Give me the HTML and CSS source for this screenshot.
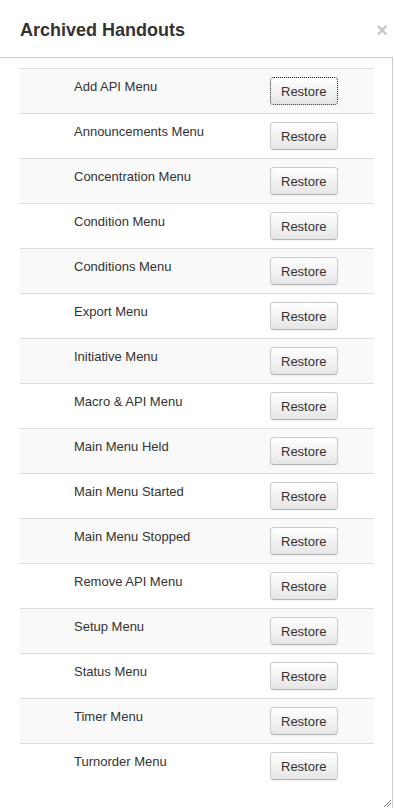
FILE: index.html
```html
<!DOCTYPE html>
<html lang="en">
<head>
    <meta charset="UTF-8">
    <meta name="viewport" content="width=device-width, initial-scale=1.0">
    <title>Archived Handouts</title>
    <link rel="stylesheet" href="styles.css">
</head>
<body>
    <div class="dialog">
        <div class="dialog-header">
            <h2>Archived Handouts</h2>
            <span class="close">&times;</span>
        </div>

        <!-- Archived handout list -->
        <div class="dialog-content">
            <table class="handouts">
                <tbody>
                    <tr><td class="name">Add API Menu</td><td class="action"><button class="btn focus">Restore</button></td></tr>
                    <tr><td class="name">Announcements Menu</td><td class="action"><button class="btn">Restore</button></td></tr>
                    <tr><td class="name">Concentration Menu</td><td class="action"><button class="btn">Restore</button></td></tr>
                    <tr><td class="name">Condition Menu</td><td class="action"><button class="btn">Restore</button></td></tr>
                    <tr><td class="name">Conditions Menu</td><td class="action"><button class="btn">Restore</button></td></tr>
                    <tr><td class="name">Export Menu</td><td class="action"><button class="btn">Restore</button></td></tr>
                    <tr><td class="name">Initiative Menu</td><td class="action"><button class="btn">Restore</button></td></tr>
                    <tr><td class="name">Macro &amp; API Menu</td><td class="action"><button class="btn">Restore</button></td></tr>
                    <tr><td class="name">Main Menu Held</td><td class="action"><button class="btn">Restore</button></td></tr>
                    <tr><td class="name">Main Menu Started</td><td class="action"><button class="btn">Restore</button></td></tr>
                    <tr><td class="name">Main Menu Stopped</td><td class="action"><button class="btn">Restore</button></td></tr>
                    <tr><td class="name">Remove API Menu</td><td class="action"><button class="btn">Restore</button></td></tr>
                    <tr><td class="name">Setup Menu</td><td class="action"><button class="btn">Restore</button></td></tr>
                    <tr><td class="name">Status Menu</td><td class="action"><button class="btn">Restore</button></td></tr>
                    <tr><td class="name">Timer Menu</td><td class="action"><button class="btn">Restore</button></td></tr>
                    <tr><td class="name">Turnorder Menu</td><td class="action"><button class="btn">Restore</button></td></tr>
                </tbody>
            </table>

            <!-- resize grip -->
            <svg class="grip" width="8" height="8" viewBox="0 0 8 8">
                <path d="M1 8 L8 1 M4 8 L8 4" stroke="#777" stroke-width="1" fill="none"/>
            </svg>
        </div>
    </div>
</body>
</html>
```

FILE: styles.css
```css
html, body {
    margin: 0;
    padding: 0;
    overflow: hidden;
    background: #fff;
}

body {
    font-family: "Liberation Sans", Arial, sans-serif;
    font-size: 13px;
    color: #333;
}

.dialog {
    height: 808px;
    display: flex;
    flex-direction: column;
}

.dialog-header {
    height: 57px;
    box-sizing: border-box;
    display: flex;
    align-items: flex-start;
    justify-content: space-between;
    padding: 20px 7px 0 20px;
}

.dialog-header h2 {
    margin: 0;
    font-size: 18px;
    font-weight: bold;
    line-height: 20px;
    color: #333;
}

.close {
    font-size: 20px;
    font-weight: bold;
    line-height: 20px;
    color: #000;
    opacity: 0.22;
}

.dialog-content {
    position: relative;
    flex: 1;
    width: 393px;
    border-top: 1px solid #ccc;
    border-right: 1px solid #ccc;
    padding: 10px 0 0 20px;
    box-sizing: border-box;
}

.handouts {
    width: 354px;
    border-collapse: collapse;
    border-spacing: 0;
}

.handouts td {
    padding: 8px;
    line-height: 18px;
    vertical-align: top;
    border-top: 1px solid #ddd;
}

.handouts tr:nth-child(odd) td {
    background-color: #f9f9f9;
}

.handouts td.name {
    padding-left: 54px;
    width: 180px;
    line-height: 20px;
}

.handouts td.action {
    width: 96px;
}

.btn {
    display: inline-block;
    vertical-align: top;
    margin: 0;
    padding: 5px 10px 3px;
    font-family: inherit;
    font-size: 13px;
    line-height: 18px;
    color: #333;
    background-color: #f5f5f5;
    background-image: linear-gradient(to bottom, #ffffff, #e6e6e6);
    border: 1px solid #ccc;
    border-bottom-color: #b3b3b3;
    border-radius: 4px;
    box-shadow: inset 0 1px 0 rgba(255, 255, 255, 0.2), 0 1px 2px rgba(0, 0, 0, 0.05);
    cursor: pointer;
}

.btn.focus {
    border-color: #222;
    border-style: dotted;
}

.grip {
    position: absolute;
    right: 1px;
    bottom: 1px;
}
```
